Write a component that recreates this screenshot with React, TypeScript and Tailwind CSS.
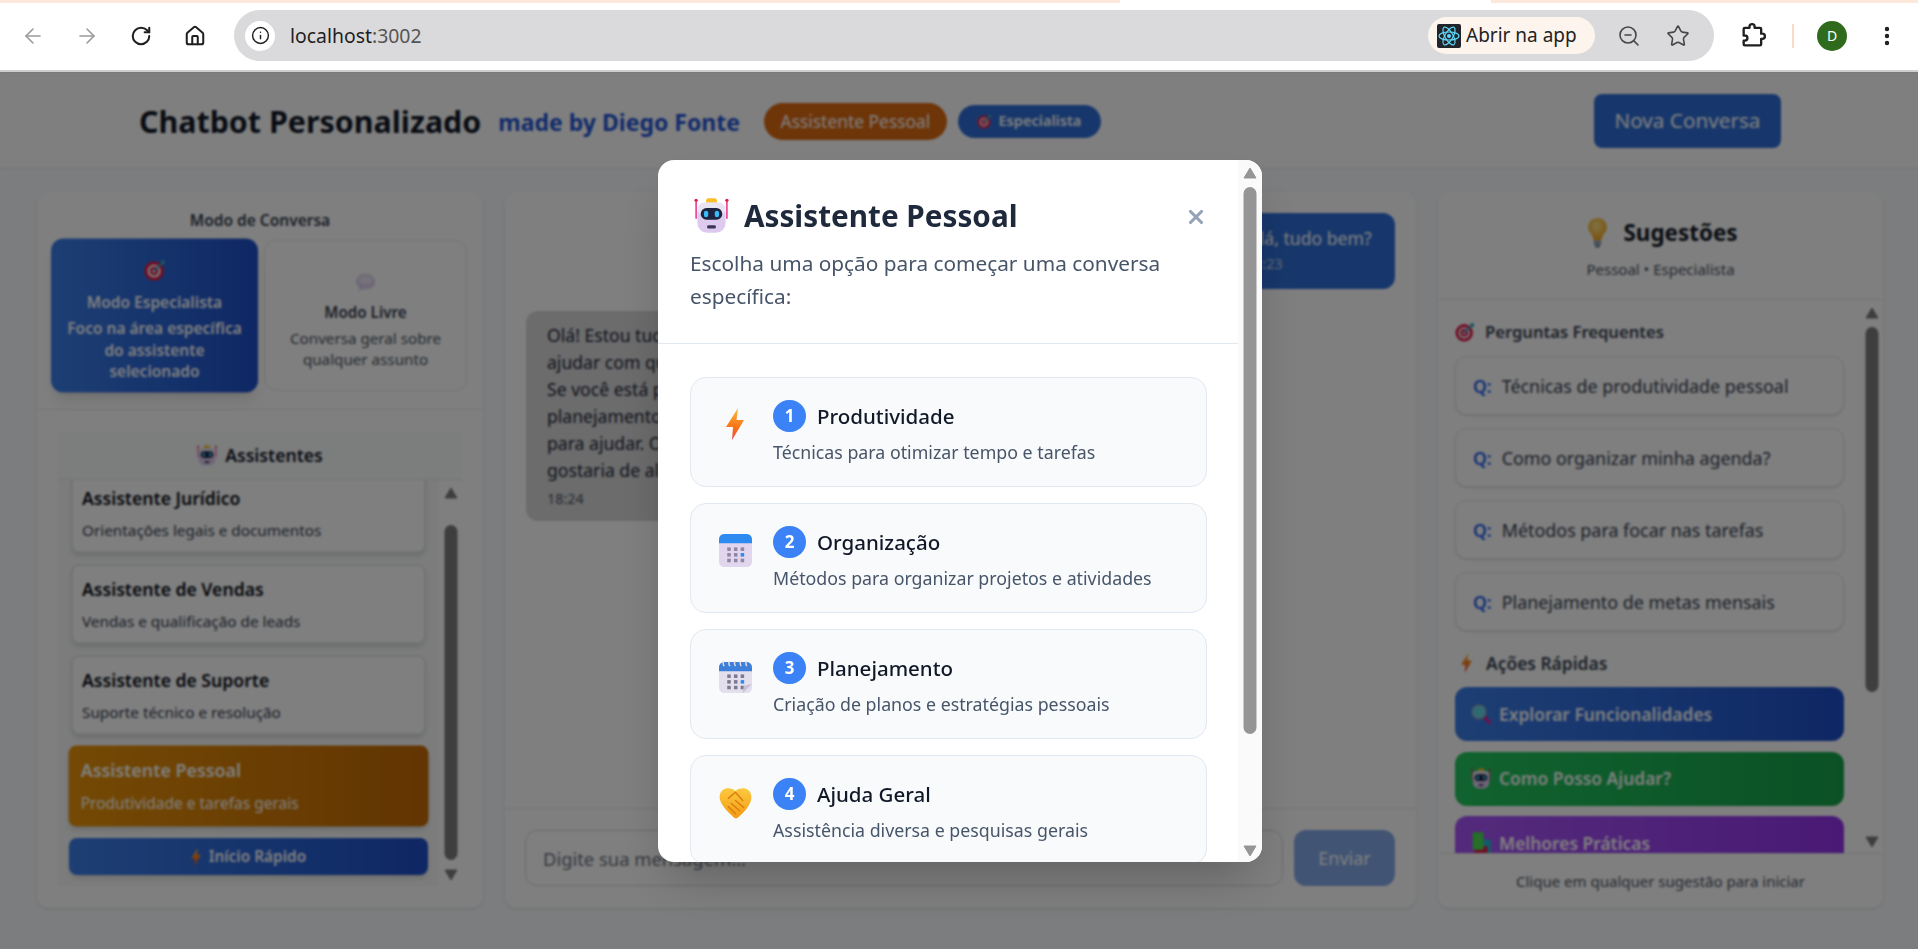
import React from "react";
import { ArrowLeft, ArrowRight, RotateCw, House, Info, ZoomOut, Star, EllipsisVertical, X } from "lucide-react";

// 3D-ish emoji drawn by hand, the reference uses Fluent emoji
function RobotIcon({ className }: { className?: string }) {
  return (
    <svg viewBox="0 0 32 36" className={className}>
      <rect x="1" y="5" width="1.6" height="16" fill="#ec4899" />
      <rect x="29.4" y="5" width="1.6" height="16" fill="#ec4899" />
      <circle cx="1.8" cy="4" r="1.5" fill="#e11d48" />
      <circle cx="30.2" cy="4" r="1.5" fill="#e11d48" />
      <rect x="11" y="2" width="10" height="5" rx="2" fill="#fbbf24" />
      <rect x="3" y="6" width="26" height="28" rx="9" fill="#dccbee" />
      <rect x="3" y="6" width="26" height="12" rx="6" fill="#e9e4f2" />
      <rect x="6" y="11" width="20" height="11" rx="5.5" fill="#1e2440" />
      <rect x="9" y="13.5" width="4" height="6" rx="2" fill="#38bdf8" />
      <rect x="19" y="13.5" width="4" height="6" rx="2" fill="#38bdf8" />
      <rect x="12" y="27" width="8" height="3" rx="1.2" fill="#3b3555" />
    </svg>
  );
}

function BoltIcon({ className }: { className?: string }) {
  return (
    <svg viewBox="0 0 18 32" className={className}>
      <defs>
        <linearGradient id="bolt" x1="0" y1="0" x2="0" y2="1">
          <stop offset="0" stopColor="#fdba3b" />
          <stop offset="0.6" stopColor="#f97316" />
          <stop offset="1" stopColor="#ef4444" />
        </linearGradient>
      </defs>
      <path d="M12 0 L0 19 L7 19 L6 32 L18 12 L10.5 12 Z" fill="url(#bolt)" />
    </svg>
  );
}

function CalendarIcon({ className }: { className?: string }) {
  const dots = [0, 1, 2];
  return (
    <svg viewBox="0 0 32 32" className={className}>
      <rect x="0" y="0" width="32" height="32" rx="5" fill="#e1d6ee" />
      <path d="M0 9 V5 a5 5 0 0 1 5 -5 H27 a5 5 0 0 1 5 5 V9 Z" fill="#2e8af0" />
      {dots.map((r) =>
        dots.map((c) => (
          <rect key={`${r}${c}`} x={8 + c * 6.5} y={13 + r * 5.5} width="3.4" height="3.4" fill={r === 1 && c === 2 ? "#2e8af0" : "#8d85a3"} />
        ))
      )}
    </svg>
  );
}

function SpiralCalendarIcon({ className }: { className?: string }) {
  const dots = [0, 1, 2];
  return (
    <svg viewBox="0 0 32 32" className={className}>
      <rect x="0" y="2" width="32" height="30" rx="5" fill="#e3dfec" />
      <path d="M0 11 V7 a5 5 0 0 1 5 -5 H27 a5 5 0 0 1 5 5 V11 Z" fill="#3d7fd9" />
      {[5, 10.5, 16, 21.5, 27].map((x) => (
        <path key={x} d="M0 0 q-2 2 0 5" transform={`translate(${x} 1)`} stroke="#e3dfec" strokeWidth="1.4" fill="none" />
      ))}
      {dots.map((r) =>
        dots.map((c) => (
          <rect key={`${r}${c}`} x={8 + c * 6.5} y={14 + r * 5.5} width="3.4" height="3.4" fill={r === 1 && c === 2 ? "#2e8af0" : "#7c7890"} />
        ))
      )}
      <path d="M32 23 L23 32 L24 25 Z" fill="#c7c1d4" />
    </svg>
  );
}

function HandshakeIcon({ className }: { className?: string }) {
  return (
    <svg viewBox="0 0 32 32" className={className}>
      <defs>
        <linearGradient id="hand" x1="0" y1="0" x2="0" y2="1">
          <stop offset="0" stopColor="#fcc93f" />
          <stop offset="1" stopColor="#f49b14" />
        </linearGradient>
      </defs>
      <path d="M16 5 C12 1 3 1 1 8 C-1 15 5 22 15 31 C17 32 18 31 20 29 C27 23 33 15 31 8 C29 1 20 1 16 5 Z" fill="url(#hand)" />
      <path d="M9 12 L16 6 L23 14 M12 17 L20 24 M9 20 L16 27 M16 14 L24 21" stroke="#d97f0e" strokeWidth="1.4" fill="none" strokeLinecap="round" />
    </svg>
  );
}

function TargetIcon({ className }: { className?: string }) {
  return (
    <svg viewBox="0 0 24 24" className={className}>
      <circle cx="11" cy="13" r="10.5" fill="#e11d48" />
      <circle cx="11" cy="13" r="7" fill="#f4e9ee" />
      <circle cx="11" cy="13" r="4.5" fill="#e11d48" />
      <circle cx="11" cy="13" r="2" fill="#f4e9ee" />
      <path d="M11 13 L20 4" stroke="#38a3c9" strokeWidth="2" />
      <path d="M18 2 L22 1 L23 5 L20 7 Z" fill="#38a3c9" />
    </svg>
  );
}

function BubbleIcon({ className }: { className?: string }) {
  return (
    <svg viewBox="0 0 24 24" className={className}>
      <path d="M12 2 C18 2 23 6 23 11.5 C23 17 18 20 12 20 C10.5 20 9 20 8 19.5 L4 23 L5 17.5 C2.5 16 1 14 1 11.5 C1 6 6 2 12 2 Z" fill="#dcd0ef" />
      <ellipse cx="12" cy="9" rx="8" ry="5" fill="#ece5f7" />
    </svg>
  );
}

function BulbIcon({ className }: { className?: string }) {
  return (
    <svg viewBox="0 0 20 32" className={className}>
      <defs>
        <radialGradient id="bulb" cx="0.45" cy="0.35" r="0.7">
          <stop offset="0" stopColor="#fde68a" />
          <stop offset="1" stopColor="#f59e0b" />
        </radialGradient>
      </defs>
      <path d="M10 0 C16 0 20 4.5 20 10 C20 15 15 17 14 24 H6 C5 17 0 15 0 10 C0 4.5 4 0 10 0 Z" fill="url(#bulb)" />
      <rect x="6" y="24" width="8" height="5" rx="1" fill="#94a3b8" />
      <rect x="7.5" y="29" width="5" height="2.5" rx="1" fill="#64748b" />
    </svg>
  );
}

function LensIcon({ className }: { className?: string }) {
  return (
    <svg viewBox="0 0 24 24" className={className}>
      <path d="M14 14 L22 22" stroke="#e11d8f" strokeWidth="4" strokeLinecap="round" />
      <circle cx="9.5" cy="9.5" r="9" fill="#9ca3af" />
      <circle cx="9.5" cy="9.5" r="7.5" fill="#5fd4e8" />
    </svg>
  );
}

function BooksIcon({ className }: { className?: string }) {
  return (
    <svg viewBox="0 0 24 28" className={className}>
      <rect x="14" y="10" width="10" height="17" fill="#22b8d6" />
      <rect x="4" y="18" width="16" height="9" fill="#e11d48" />
      <rect x="2" y="1" width="13" height="21" rx="1" fill="#4ade50" />
    </svg>
  );
}

function ReactLogo() {
  return (
    <svg viewBox="0 0 24 24" className="w-[24px] h-[26px]">
      <rect width="24" height="24" rx="2" fill="#20232a" />
      <g stroke="#61dafb" strokeWidth="1.2" fill="none">
        <ellipse cx="12" cy="12" rx="10" ry="4" />
        <ellipse cx="12" cy="12" rx="10" ry="4" transform="rotate(60 12 12)" />
        <ellipse cx="12" cy="12" rx="10" ry="4" transform="rotate(120 12 12)" />
      </g>
      <circle cx="12" cy="12" r="2" fill="#61dafb" />
    </svg>
  );
}

function ExtensionIcon() {
  return (
    <svg viewBox="0 0 24 24" fill="none" stroke="#1f1f1f" strokeWidth="2" strokeLinejoin="round" className="w-[28px] h-[28px] ml-[25px]">
      <path d="M9 4 a2.2 2.2 0 0 1 4.4 0 v1 h4.6 a1 1 0 0 1 1 1 v4 h1 a2.2 2.2 0 0 1 0 4.4 h-1 v4.6 a1 1 0 0 1 -1 1 H5 a1 1 0 0 1 -1 -1 v-3 h1 a2.2 2.2 0 0 0 0 -4.4 H4 V6 a1 1 0 0 1 1 -1 h4 Z" />
    </svg>
  );
}

// Windows style scrollbar, the sandbox browser does not draw this one
function Scrollbar({ className, thumbClass }: { className: string; thumbClass: string }) {
  return (
    <div className={`relative shrink-0 ${className}`}>
      <svg viewBox="0 0 14 12" className="absolute left-1/2 -translate-x-1/2 top-[7px] w-[14px] h-[12px]">
        <path d="M7 1 L13 11 H1 Z" fill="currentColor" stroke="currentColor" strokeLinejoin="round" />
      </svg>
      <div className={`absolute left-1/2 -translate-x-1/2 w-[13px] rounded-full bg-current ${thumbClass}`} />
      <svg viewBox="0 0 14 12" className="absolute left-1/2 -translate-x-1/2 bottom-[5px] w-[14px] h-[12px]">
        <path d="M7 11 L13 1 H1 Z" fill="currentColor" stroke="currentColor" strokeLinejoin="round" />
      </svg>
    </div>
  );
}

function Toolbar() {
  return (
    <div className="h-[72px] bg-white relative border-b-2 border-[#cfcfcf]">
      <div className="flex h-[3px]">
        <div className="w-[1120px] bg-[#fde9dc]" />
        <div className="w-[371px]" />
        <div className="flex-1 bg-[#fde9dc]" />
      </div>
      <div className="flex items-center h-[51px] mt-[7px] pl-[21px]">
        <ArrowLeft className="w-6 h-6 text-[#9a9a9a] mr-[30px]" strokeWidth={1.6} />
        <ArrowRight className="w-6 h-6 text-[#9a9a9a] mr-[31px]" strokeWidth={1.6} />
        <RotateCw className="w-[22px] h-[22px] text-[#1f1f1f] mr-[32px]" strokeWidth={2.2} />
        <House className="w-[22px] h-[22px] text-[#1f1f1f] mr-[28px]" strokeWidth={2.2} />
        <div className="flex items-center w-[1480px] h-[51px] rounded-full bg-[#dadadc] pl-[11px] pr-[24px]">
          <div className="w-[30px] h-[30px] rounded-full bg-white flex items-center justify-center mr-[15px]">
            <Info className="w-[19px] h-[19px] text-[#1f1f1f]" strokeWidth={1.8} />
          </div>
          <span className="text-[19.4px] text-[#1f1f1f]">
            localhost<span className="text-[#555]">:3002</span>
          </span>
          <div className="ml-auto flex items-center h-[37px] w-[167px] rounded-full bg-[#fdf4ee] pl-[9px] gap-[5px] mr-[22px]">
            <ReactLogo />
            <span className="text-[19px] text-[#222] whitespace-nowrap">Abrir na app</span>
          </div>
          <ZoomOut className="w-[24px] h-[24px] text-[#474747] mr-[25px]" strokeWidth={1.6} />
          <Star className="w-[24px] h-[24px] text-[#474747]" strokeWidth={1.6} />
        </div>
        <ExtensionIcon />
        <div className="w-[2px] h-[24px] bg-[#fbd9c4] ml-[25px]" />
        <div className="w-[30px] h-[30px] rounded-full bg-[#2f6b1c] text-white text-[14px] flex items-center justify-center ml-[23px]">D</div>
        <EllipsisVertical className="w-6 h-6 text-[#1f1f1f] ml-[28px]" strokeWidth={2.4} />
      </div>
    </div>
  );
}

function ModeCard({ active, icon, title, desc }: { active?: boolean; icon: React.ReactNode; title: string; desc: string }) {
  return (
    <div
      className={
        active
          ? "h-[151px] rounded-xl flex flex-col items-center justify-center text-center px-3 pt-[8px] scale-[1.02] bg-gradient-to-r from-[#3b7ee8] to-[#1e4fc9] text-white shadow-lg"
          : "h-[151px] rounded-xl flex flex-col items-center justify-center text-center px-3 pt-[10px] border border-[#e5e7eb] bg-white"
      }
    >
      {icon}
      <div className={active ? "text-[15.2px] font-semibold mt-[8px] leading-[22px]" : "text-[15.2px] font-semibold mt-[8px] leading-[22px] text-[#374151]"}>{title}</div>
      <div className={active ? "text-[15.2px] font-semibold leading-[21px] mt-[5px]" : "text-[15.2px] leading-[21px] mt-[5px] text-[#4b5563]"}>{desc}</div>
    </div>
  );
}

function AssistantCard({ title, desc }: { title: string; desc: string }) {
  return (
    <div className="h-[80px] rounded-lg bg-white border-2 border-[#e5e7eb] shadow-md px-[9px] pt-[12px]">
      <div className="text-[17.6px] font-semibold leading-[22px] text-[#0b0f19]">{title}</div>
      <div className="text-[15.3px] leading-[20px] mt-[11px] text-[#374151] whitespace-nowrap">{desc}</div>
    </div>
  );
}

function LeftPanel() {
  return (
    <div className="w-[446px] rounded-xl bg-white flex flex-col shadow-sm">
      <div className="px-4 pt-[18px] pb-[18px] border-b border-[#e5e7eb]">
        <div className="text-[15.5px] font-semibold leading-[20px] text-center text-[#374151] mb-[10px]">Modo de Conversa</div>
        <div className="grid grid-cols-2 gap-2">
          <ModeCard active icon={<TargetIcon className="w-[22px] h-[24px]" />} title="Modo Especialista" desc="Foco na área específica do assistente selecionado" />
          <ModeCard icon={<BubbleIcon className="w-[21px] h-[21px]" />} title="Modo Livre" desc="Conversa geral sobre qualquer assunto" />
        </div>
      </div>
      <div className="flex-1 flex flex-col px-[21px] pt-[22px] pb-[22px] min-h-0">
        <div className="h-[48px] shrink-0 bg-[#f9fafb] border-b border-[#e5e7eb] flex items-center justify-center gap-[8px]">
          <RobotIcon className="w-[20px] h-[23px]" />
          <span className="text-[17.6px] font-semibold text-[#111827]">Assistentes</span>
        </div>
        <div className="flex-1 flex min-h-0">
          <div className="flex-1 min-w-0 overflow-hidden bg-[#f8f9fa] px-[13px]">
            <div className="flex flex-col gap-[11px] -mt-[7px]">
              <AssistantCard title="Assistente Jurídico" desc="Orientações legais e documentos" />
              <AssistantCard title="Assistente de Vendas" desc="Vendas e qualificação de leads" />
              <AssistantCard title="Assistente de Suporte" desc="Suporte técnico e resolução" />
              <div className="h-[80px] rounded-lg scale-[1.014] bg-gradient-to-r from-[#e8930a] to-[#c46a04] shadow-md px-[12px] pt-[13px] text-white">
                <div className="text-[17.6px] font-semibold leading-[22px]">Assistente Pessoal</div>
                <div className="text-[15.3px] leading-[20px] mt-[12px]">Produtividade e tarefas gerais</div>
              </div>
              <div className="h-[37px] mt-[1px] pt-[1px] rounded-lg -mx-[2px] bg-gradient-to-r from-[#3b7ee8] to-[#1e4fc9] shadow-md flex items-center justify-center gap-[8px] text-white text-[15.4px] font-semibold">
                <BoltIcon className="w-[10px] h-[18px]" />
                Início Rápido
              </div>
            </div>
          </div>
          <Scrollbar className="w-[23px] text-[#7c7c7c]" thumbClass="top-[45px] h-[335px]" />
        </div>
      </div>
    </div>
  );
}

function ChatPanel() {
  return (
    <div className="flex-1 rounded-xl bg-white flex flex-col shadow-sm min-w-0">
      <div className="flex-1 min-h-0 pl-[21px] pr-[21px] pt-[21px] overflow-hidden">
        <div className="flex justify-end">
          <div className="w-[171px] h-[76px] rounded-xl bg-[#2f6fd8] text-white pl-[22px] pt-[12px]">
            <div className="text-[17.6px] leading-[27px] whitespace-nowrap">Olá, tudo bem?</div>
            <div className="text-[14.4px] leading-[18px] mt-[3px] text-white/70">18:23</div>
          </div>
        </div>
        <div className="mt-[22px] w-[640px] h-[210px] rounded-xl bg-[#d8d8da] pl-[21px] pt-[11px] text-[#1f2937]">
          <div className="text-[17.6px] leading-[27px] whitespace-nowrap">
            <div>Olá! Estou tudo bem</div>
            <div>ajudar com qualquer</div>
            <div>Se você está pronto</div>
            <div>planejamento pessoal</div>
            <div>para ajudar. O que</div>
            <div>gostaria de alcançar</div>
          </div>
          <div className="text-[14.4px] leading-[18px] mt-[6px] text-[#4b5563]">18:24</div>
        </div>
      </div>
      <div className="h-[100px] shrink-0 border-t border-[#e5e7eb] flex gap-[11px] pl-[20px] pr-[21px] pt-[21px]">
        <input
          readOnly
          placeholder="Digite sua mensagem..."
          className="flex-1 min-w-0 h-[56px] rounded-xl border border-[#d1d5db] px-[17px] text-[18.4px] placeholder:text-[#6b7280] bg-white"
        />
        <div className="w-[101px] h-[56px] rounded-xl bg-[#2f6fd8]/60 text-white text-[18px] flex items-center justify-center">Enviar</div>
      </div>
    </div>
  );
}

function QuestionCard({ text }: { text: string }) {
  return (
    <div className="h-[59px] pt-[1px] rounded-xl bg-white border border-[#e5e7eb] shadow-sm flex items-center pl-[17px] gap-[10px] text-[17.9px] text-[#374151]">
      <span className="font-semibold text-[#2563eb] text-[17.6px]">Q:</span>
      <span className="whitespace-nowrap">{text}</span>
    </div>
  );
}

function ActionButton({ className, icon, text }: { className: string; icon: React.ReactNode; text: string }) {
  return (
    <div className={`h-[54px] shrink-0 rounded-xl flex items-center pl-[16px] gap-[8px] text-white text-[17.4px] font-semibold ${className}`}>
      {icon}
      {text}
    </div>
  );
}

function RightPanel() {
  return (
    <div className="w-[445px] rounded-xl bg-white flex flex-col shadow-sm">
      <div className="h-[108px] shrink-0 border-b border-[#e5e7eb] flex flex-col items-center pt-[25px]">
        <div className="flex items-center gap-[17px] h-[32px] ml-[4px]">
          <BulbIcon className="w-[19px] h-[30px]" />
          <span className="text-[22.4px] font-bold text-[#111827]">Sugestões</span>
        </div>
        <div className="text-[15px] leading-[20px] mt-[10px] text-[#4b5563]">Pessoal • Especialista</div>
      </div>
      <div className="flex-1 flex min-h-0">
        <div className="flex-1 min-w-0 overflow-hidden pl-[17px] pr-[16px] pt-[21px]">
          <div className="flex items-center gap-[10px] h-[22px] text-[16.6px] font-semibold text-[#374151] mb-[13px]">
            <TargetIcon className="w-[20px] h-[22px]" />
            Perguntas Frequentes
          </div>
          <div className="flex flex-col gap-[13px]">
            <QuestionCard text="Técnicas de produtividade pessoal" />
            <QuestionCard text="Como organizar minha agenda?" />
            <QuestionCard text="Métodos para focar nas tarefas" />
            <QuestionCard text="Planejamento de metas mensais" />
          </div>
          <div className="flex items-center gap-[14px] h-[22px] pl-[6px] text-[17.4px] font-semibold text-[#374151] mt-[21px] mb-[13px]">
            <BoltIcon className="w-[11px] h-[20px]" />
            Ações Rápidas
          </div>
          <div className="flex flex-col gap-[10.5px]">
            <ActionButton className="bg-gradient-to-r from-[#3b7ee8] to-[#1e4fc9]" icon={<LensIcon className="w-[20px] h-[20px]" />} text="Explorar Funcionalidades" />
            <ActionButton className="bg-gradient-to-r from-[#22c55e] to-[#16a34a]" icon={<RobotIcon className="w-[20px] h-[23px]" />} text="Como Posso Ajudar?" />
            <ActionButton className="bg-gradient-to-r from-[#a855f7] to-[#9333ea]" icon={<BooksIcon className="w-[20px] h-[24px]" />} text="Melhores Práticas" />
          </div>
        </div>
        <Scrollbar className="w-[23px] text-[#7c7c7c]" thumbClass="top-[27px] h-[365px]" />
      </div>
      <div className="h-[55px] shrink-0 border-t border-[#e5e7eb] flex items-center justify-center text-[15px] text-[#4b5563]">
        Clique em qualquer sugestão para iniciar
      </div>
    </div>
  );
}

function OptionCard({ icon, n, title, desc }: { icon: React.ReactNode; n: number; title: string; desc: string }) {
  return (
    <div className="h-[110px] shrink-0 rounded-2xl bg-[#f8fafc] border border-[#e2e8f0] flex pl-[27px] pt-[22px]">
      <div className="w-[34px] shrink-0 flex justify-center pt-[8px]">{icon}</div>
      <div className="ml-[21px]">
        <div className="flex items-center gap-[11px] h-[33px]">
          <div className="w-[33px] h-[32px] rounded-full bg-[#3b82f6] text-white text-[17px] font-bold flex items-center justify-center">{n}</div>
          <span className="text-[20.5px] font-medium text-[#111827]">{title}</span>
        </div>
        <div className="text-[17.8px] leading-[24px] mt-[7px] text-[#475569] whitespace-nowrap">{desc}</div>
      </div>
    </div>
  );
}

function Modal() {
  return (
    <div className="w-[604px] h-[702px] rounded-2xl bg-white shadow-2xl flex overflow-hidden">
      <div className="flex-1 min-w-0 overflow-hidden">
        <div className="h-[184px] border-b border-[#e2e8f0] pl-8 pr-[31px] pt-[32px] relative">
          <div className="flex items-center gap-[15px] h-[48px] pl-[4px]">
            <RobotIcon className="w-[35px] h-[39px]" />
            <span className="text-[29.7px] font-bold text-[#1e293b] leading-[48px]">Assistente Pessoal</span>
          </div>
          <X className="absolute right-[31px] top-[46px] w-[22px] h-[22px] text-[#94a3b8]" strokeWidth={3.4} />
          <p className="text-[20.8px] leading-[33px] mt-[7px] text-[#475569]">Escolha uma opção para começar uma conversa específica:</p>
        </div>
        <div className="pl-8 pr-[31px] pt-[33px] flex flex-col gap-4">
          <OptionCard icon={<BoltIcon className="w-[18px] h-[32px]" />} n={1} title="Produtividade" desc="Técnicas para otimizar tempo e tarefas" />
          <OptionCard icon={<CalendarIcon className="w-[33px] h-[33px]" />} n={2} title="Organização" desc="Métodos para organizar projetos e atividades" />
          <OptionCard icon={<SpiralCalendarIcon className="w-[33px] h-[33px]" />} n={3} title="Planejamento" desc="Criação de planos e estratégias pessoais" />
          <OptionCard icon={<HandshakeIcon className="w-[33px] h-[33px]" />} n={4} title="Ajuda Geral" desc="Assistência diversa e pesquisas gerais" />
        </div>
      </div>
      <Scrollbar className="w-[24px] bg-[#fafafa] text-[#959595]" thumbClass="top-[27px] h-[547px]" />
    </div>
  );
}

export default function App() {
  return (
    <div className="w-[1918px] h-[949px] overflow-hidden bg-white font-['Noto_Sans',sans-serif]">
      <Toolbar />
      <div className="relative h-[877px] bg-[#f8fafc]">
        <div className="h-[97px] pt-[2px] bg-white border-b border-[#e5e7eb] flex items-center pl-[139px] pr-[137px]">
          <h1 className="mt-[2px] text-[30.4px] font-bold text-[#111827] whitespace-nowrap">Chatbot Personalizado</h1>
          <span className="mt-[2px] ml-[17px] text-[23px] font-bold text-[#2456d6] whitespace-nowrap">made by Diego Fonte</span>
          <span className="ml-[24px] h-[37px] w-[183px] rounded-full bg-[#dd6a12] text-white text-[17.4px] flex items-center justify-center whitespace-nowrap">Assistente Pessoal</span>
          <span className="ml-[11px] h-[33px] w-[143px] rounded-full bg-[#2f6fd8] text-white text-[14.6px] font-semibold flex items-center justify-center gap-[6px]">
            <TargetIcon className="w-[15px] h-[15px]" />
            Especialista
          </span>
          <div className="ml-auto h-[54px] w-[187px] rounded-lg bg-[#2f6fd8] text-white text-[20.7px] flex items-center justify-center">Nova Conversa</div>
        </div>
        <div className="flex h-[716px] mt-[23px] ml-[37px] mr-[35px] gap-[22px]">
          <LeftPanel />
          <ChatPanel />
          <RightPanel />
        </div>
        <div className="absolute inset-0 bg-black/50 backdrop-blur-[1px] flex items-center justify-center pl-[2px]">
          <Modal />
        </div>
      </div>
    </div>
  );
}
